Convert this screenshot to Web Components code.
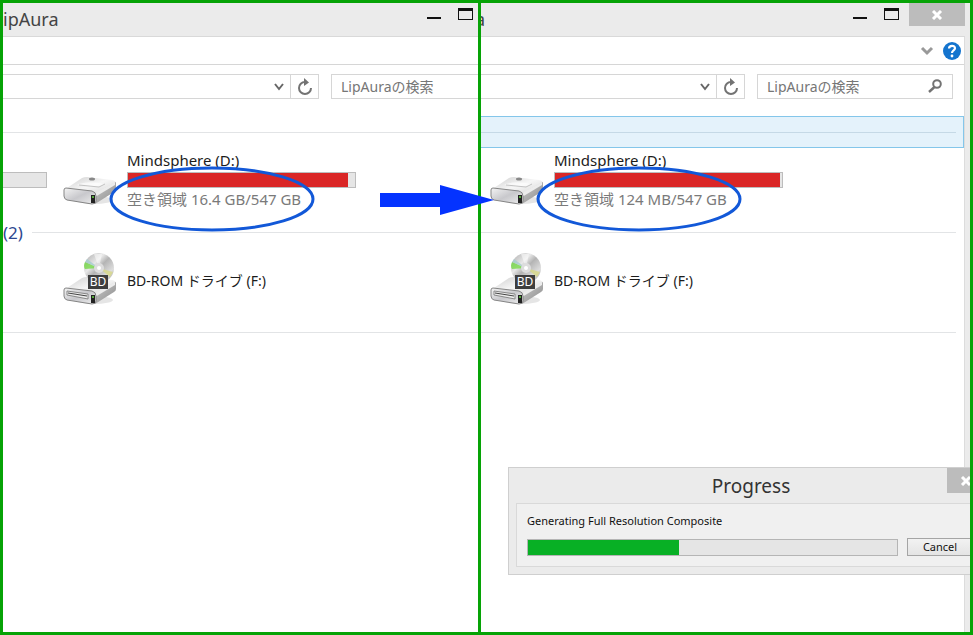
<!DOCTYPE html>
<html lang="ja">
<head>
<meta charset="utf-8">
<title>LipAura</title>
<style>
  html, body { height: 100%; margin: 0; }
  body { font-family: "Noto Sans", "Noto Sans CJK JP", sans-serif; font-size: 15px; color: #1c1c1c; background: #fff; }
</style>
</head>
<body>
<split-frame>
  <explorer-window slot="before" name="ipAura" clipped>
    <section-rule></section-rule>
    <drive-row>
      <usage-meter slot="previous" used="0"></usage-meter>
      <drive-icon></drive-icon>
      <drive-info slot="info" label="Mindsphere (D:)" space="空き領域 16.4 GB/547 GB" used="97"></drive-info>
    </drive-row>
    <section-rule>(2)</section-rule>
    <drive-row>
      <drive-icon kind="bd"></drive-icon>
      <drive-info slot="info" label="BD-ROM ドライブ (F:)"></drive-info>
    </drive-row>
    <section-rule></section-rule>
  </explorer-window>
  <explorer-window slot="after" name="a">
    <section-rule selected></section-rule>
    <drive-row>
      <drive-icon></drive-icon>
      <drive-info slot="info" label="Mindsphere (D:)" space="空き領域 124 MB/547 GB" used="99"></drive-info>
    </drive-row>
    <section-rule></section-rule>
    <drive-row>
      <drive-icon kind="bd"></drive-icon>
      <drive-info slot="info" label="BD-ROM ドライブ (F:)"></drive-info>
    </drive-row>
    <section-rule></section-rule>
    <progress-dialog slot="dialog" heading="Progress" value="41">Generating Full Resolution Composite</progress-dialog>
  </explorer-window>
</split-frame>
<script>
const define = (name, render) => customElements.define(name, class extends HTMLElement {
  connectedCallback() {
    if (this.shadowRoot) return;
    const t = document.createElement('template');
    t.innerHTML = render(this);
    this.attachShadow({ mode: 'open' }).append(t.content.cloneNode(true));
  }
});

define('split-frame', () => `
<style>
  :host { display: grid; grid-template-columns: 475fr 3px 489fr; box-sizing: border-box; min-height: 100vh; border: 3px solid #06a306; overflow: hidden; }
  ::slotted(*) { min-width: 0; }
  .divider { position: relative; z-index: 2; background: #06a306; }
  .arrow { position: absolute; left: -98px; top: 182px; display: block; }
</style>
<slot name="before"></slot>
<div class="divider">
  <svg class="arrow" width="114" height="30" viewBox="0 0 114 30" aria-hidden="true"><path fill="#0433ff" d="M0 8H60V0L114 15L60 30V22H0Z"/></svg>
</div>
<slot name="after"></slot>`);

define('window-controls', el => `
<style>
  :host { display: flex; align-items: flex-start; gap: 9px; }
  .pair { display: flex; gap: 16px; padding-top: 4px; }
  button { display: block; border: 0; padding: 0; background: none; }
  svg { display: block; }
  .close { width: 56px; height: 23px; background: #bcbcbc; display: grid; place-items: center; }
</style>
<div class="pair">
  <button aria-label="最小化"><svg width="16" height="14"><path d="M1 11h14" stroke="#111" stroke-width="2"/></svg></button>
  <button aria-label="最大化"><svg width="16" height="14"><path fill="#111" fill-rule="evenodd" d="M0 1h15v12H0zM1 4v8h13V4z"/></svg></button>
</div>
${el.hasAttribute('closable') ? '<button class="close" aria-label="閉じる"><svg width="12" height="10"><path d="M2 1l8 8M10 1l-8 8" stroke="#fff" stroke-width="3"/></svg></button>' : ''}`);

define('explorer-window', el => {
  const clipped = el.hasAttribute('clipped');
  return `
<style>
  :host { display: flex; flex-direction: column; position: relative; overflow: hidden; background: #ebebeb; }
  header { display: flex; justify-content: space-between; height: 33px; }
  h1 { display: flex; ${clipped ? '' : 'justify-content: flex-end; width: 4px; overflow: hidden;'} margin: 0; font-size: 18px; line-height: 33px; font-weight: 400; color: #444; }
  window-controls { margin-right: ${clipped ? 4 : 5}px; }
  main { flex: 1; margin-right: ${clipped ? 0 : 5}px; background: #fff; border-top: 1px solid #d9d9d9; ${clipped ? '' : 'border-right: 1px solid #dcdcdc;'} }
  .ribbon { display: flex; justify-content: flex-end; align-items: center; gap: 9px; height: 27px; padding-right: 3px; border-bottom: 1px solid #d6d6d6; }
  .bar { display: flex; gap: 12px; padding: 9px ${clipped ? 0 : 11}px 17px 0; }
  .address { flex: 1; display: flex; min-width: 0; border: solid #d6d6d6; border-width: 1px 1px 1px 0; }
  .search { display: flex; align-items: center; width: ${clipped ? 147 : 196}px; box-sizing: border-box; height: 25px; border: 1px solid #d6d6d6; ${clipped ? 'border-right: 0;' : ''} padding: 0 10px 2px 9px; }
  input { flex: 1; min-width: 0; border: 0; padding: 0; outline: 0; background: none; font: inherit; font-size: 14px; color: #767676; }
  button { border: 0; padding: 0; background: none; display: grid; place-items: center; }
  .drop { width: 23px; }
  .refresh { width: 28px; border-left: 1px solid #d6d6d6; }
  svg { display: block; }
</style>
<header><h1>${el.getAttribute('name')}</h1><window-controls ${clipped ? '' : 'closable'}></window-controls></header>
<main>
  <div class="ribbon">${clipped ? '' : `
    <button aria-label="リボンの展開"><svg width="14" height="10"><path d="M2 2l5 5l5-5" fill="none" stroke="#999" stroke-width="3"/></svg></button>
    <button aria-label="ヘルプ"><svg width="18" height="18" viewBox="0 0 18 18"><circle cx="9" cy="9" r="9" fill="#1474ce"/><path d="M6 6.5C6.200 3 12 3 12 6.300C12 8.500 9 8.500 9 11" fill="none" stroke="#fff" stroke-width="2.200"/><circle cx="9" cy="14" r="1.400" fill="#fff"/></svg></button>`}
  </div>
  <div class="bar">
    <div class="address">
      <input aria-label="アドレス">
      <button class="drop" aria-label="履歴"><svg width="12" height="9"><path d="M2 2l4 5l4-5" fill="none" stroke="#666" stroke-width="2"/></svg></button>
      <button class="refresh" aria-label="最新の情報に更新"><svg width="16" height="18" viewBox="0 0 16 18"><path d="M8 4A6 6 0 1 0 14 10" fill="none" stroke="#737373" stroke-width="2"/><path d="M7 0l5 4.500L7 8z" fill="#737373"/></svg></button>
    </div>
    <div class="search">
      <input aria-label="検索" value="LipAuraの検索">
      ${clipped ? '' : '<button aria-label="検索を実行"><svg width="14" height="14" viewBox="0 0 14 14"><circle cx="9" cy="5" r="3.800" fill="none" stroke="#737373" stroke-width="2"/><path d="M6.500 8L1 13" stroke="#737373" stroke-width="2.400"/></svg></button>'}
    </div>
  </div>
  <slot></slot>
</main>
<slot name="dialog"></slot>`;
});

define('section-rule', el => `
<style>
  :host { display: flex; align-items: center; gap: 9px; height: 32px; box-sizing: border-box; font-size: 17px; color: #2d4790; padding-right: 8px; }
  :host([selected]) { background: #e4f2fb; border: 1px solid #84c6ea; border-left: 0; padding-right: 7px; }
  .line { flex: 1; height: 1px; background: #e2e4e6; }
  :host([selected]) .line { background: #c5d9e6; }
  ${el.closest('[clipped]') ? ':host { padding-right: 0; }' : ''}
</style>
${el.textContent ? '<slot></slot>' : ''}<span class="line"></span>`);

define('drive-row', el => {
  const clipped = el.closest('[clipped]');
  return `
<style>
  :host { display: flex; height: 68px; padding-left: ${clipped ? 0 : 9}px; }
  .previous { width: ${clipped ? 44 : 0}px; padding-top: 24px; margin-right: ${clipped ? 16 : 0}px; }
  ::slotted(drive-info) { margin-left: 9px; }
</style>
<div class="previous"><slot name="previous"></slot></div>
<slot></slot>
<slot name="info"></slot>`;
});

define('usage-meter', el => `
<style>
  :host { display: block; box-sizing: border-box; height: 16px; border: 1px solid #bdbdbd; background: #e6e6e6; }
  :host([used="0"]) { border-left: 0; }
  .fill { height: 100%; width: ${el.getAttribute('used')}%; background: #da2626; }
</style>
<div class="fill"></div>`);

define('drive-info', el => {
  const space = el.getAttribute('space');
  return `
<style>
  :host { display: block; position: relative; width: 229px; box-sizing: border-box; padding-top: ${space ? 2 : 23}px; white-space: nowrap; }
  .name { line-height: 20px; font-size: ${space ? 15 : 14}px; ${space ? 'padding-bottom: 2px;' : ''} }
  .space { line-height: 22px; color: #7a7a7a; }
  .mark { position: absolute; left: -18px; top: 18px; }
</style>
<div class="name">${el.getAttribute('label')}</div>
${space ? `<usage-meter used="${el.getAttribute('used')}"></usage-meter><div class="space">${space}</div>
<svg class="mark" width="206" height="66" aria-hidden="true"><ellipse cx="103" cy="33" rx="101" ry="31" fill="none" stroke="#1258d8" stroke-width="3"/></svg>` : ''}`;
});

define('drive-icon', el => {
  const bd = el.getAttribute('kind') === 'bd';
  return `
<style>
  :host { display: block; width: 55px; height: 64px; }
  svg { display: block; }
</style>
<svg width="55" height="64" viewBox="0 0 55 64" aria-hidden="true">
  <defs>
    <linearGradient id="top" x1="0" y1="0" x2="1" y2="1"><stop offset="0" stop-color="#ccc"/><stop offset=".5" stop-color="#f6f6f6"/><stop offset="1" stop-color="#d2d2d2"/></linearGradient>
    <linearGradient id="side" x1="0" y1="0" x2="1" y2="1"><stop offset="0" stop-color="#ccc"/><stop offset="1" stop-color="#8c8c8c"/></linearGradient>
    <linearGradient id="front" x1="0" y1="0" x2="1" y2="1"><stop offset="0" stop-color="#f4f4f4"/><stop offset=".5" stop-color="#c8c8cc"/><stop offset="1" stop-color="#eee"/></linearGradient>
    <linearGradient id="disc" x1="0" y1="0" x2="1" y2="1"><stop offset="0" stop-color="#aaa"/><stop offset=".35" stop-color="#e8e8e8"/><stop offset=".5" stop-color="#b4b4b4"/><stop offset=".75" stop-color="#ddd"/><stop offset="1" stop-color="#999"/></linearGradient>
  </defs>
  <g transform="translate(0 -1)">
    <ellipse cx="31" cy="53" rx="19" ry="4" fill="#000" opacity=".1"/>
    <path d="M1 43L19 31Q21 30 24 30L49 33Q53 34 53 36L31 48Z" fill="url(#top)"/>
    <path d="M31 47L53 35V42Q53 44 51 45L32 57Z" fill="url(#side)"/>
    <path d="M32 46L52 35V38L32 50Z" fill="#ececec"/>
    <path d="M3 41L29 44Q33 45 33 49V54Q33 57 29 57L4 53Q1 52 1 49V43Q1 41 3 41Z" fill="url(#front)" stroke="#858585"/>
    <path d="M28 48h4v8h-4z" fill="#222"/><circle cx="30" cy="50" r="1" fill="#67d743"/>
    ${bd ? '<path d="M4 44L25 47V52L4 48Z" fill="#ececec" stroke="#888"/><path d="M5 46L24 49" stroke="#444"/>'
         : '<path d="M14 38Q24 33 42 37L34 40Z" fill="#fff" opacity=".6"/><ellipse cx="29" cy="32" rx="3" ry="1.500" fill="#888"/><path d="M16 38L36 40L42 37" fill="none" stroke="#c2c2c2"/>'}
  </g>
  ${bd ? `<circle cx="36" cy="20" r="15" fill="url(#disc)"/>
  <path d="M36 20L22 14Q20 18 22 21Z" fill="#68d834" opacity=".7"/><path d="M36 20L24 11L22 14Z" fill="#a5ccd0" opacity=".8"/>
  <path d="M36 20L50 24L47 29Z" fill="#d8d886" opacity=".8"/><path d="M36 20L31 6H39Z" fill="#fff" opacity=".5"/>
  <circle cx="36" cy="20" r="5" fill="#ddd"/><circle cx="36" cy="20" r="2" fill="#fff"/>
  <rect x="25" y="27" width="20" height="14" fill="#3e3e3e"/>
  <text x="35" y="38" text-anchor="middle" font-size="12" fill="#fff">BD</text>` : ''}
</svg>`;
});

define('progress-dialog', el => `
<style>
  :host { position: absolute; left: 27px; right: -24px; bottom: 57px; box-sizing: border-box; display: block; padding: 0 7px 7px; background: #ebebeb; border: 1px solid #cfcfcf; }
  header { display: grid; grid-template-columns: 1fr auto 1fr; align-items: start; height: 35px; }
  h2 { grid-column: 2; margin: 0; font-size: 19px; line-height: 37px; font-weight: 400; color: #333; }
  .close { justify-self: end; width: 37px; height: 25px; margin-right: 2px; border: 0; padding: 0; background: #bcbcbc; display: grid; place-items: center; }
  .body { border: 1px solid #d9d9d9; background: #f0f0f0; padding: 8px 12px 10px 10px; font-size: 11px; color: #111; }
  label { display: block; line-height: 18px; }
  .row { display: flex; align-items: center; gap: 9px; margin-top: 8px; }
  .track { flex: 1; box-sizing: border-box; height: 17px; border: 1px solid #b5b5b5; background: #e5e5e5; }
  .fill { height: 100%; width: ${el.getAttribute('value')}%; background: #08b025; }
  .cancel { width: 66px; height: 18px; border: 1px solid #a5a5a5; padding: 0; background: linear-gradient(#f2f2f2, #e4e4e4); font: inherit; line-height: 16px; color: #111; }
</style>
<header><h2>${el.getAttribute('heading')}</h2><button class="close" aria-label="閉じる"><svg width="12" height="10"><path d="M2 1l8 8M10 1l-8 8" stroke="#fff" stroke-width="3"/></svg></button></header>
<div class="body">
  <label id="task"><slot></slot></label>
  <div class="row"><div class="track" role="progressbar" aria-labelledby="task" aria-valuenow="${el.getAttribute('value')}"><div class="fill"></div></div><button class="cancel">Cancel</button></div>
</div>`);
</script>
</body>
</html>
